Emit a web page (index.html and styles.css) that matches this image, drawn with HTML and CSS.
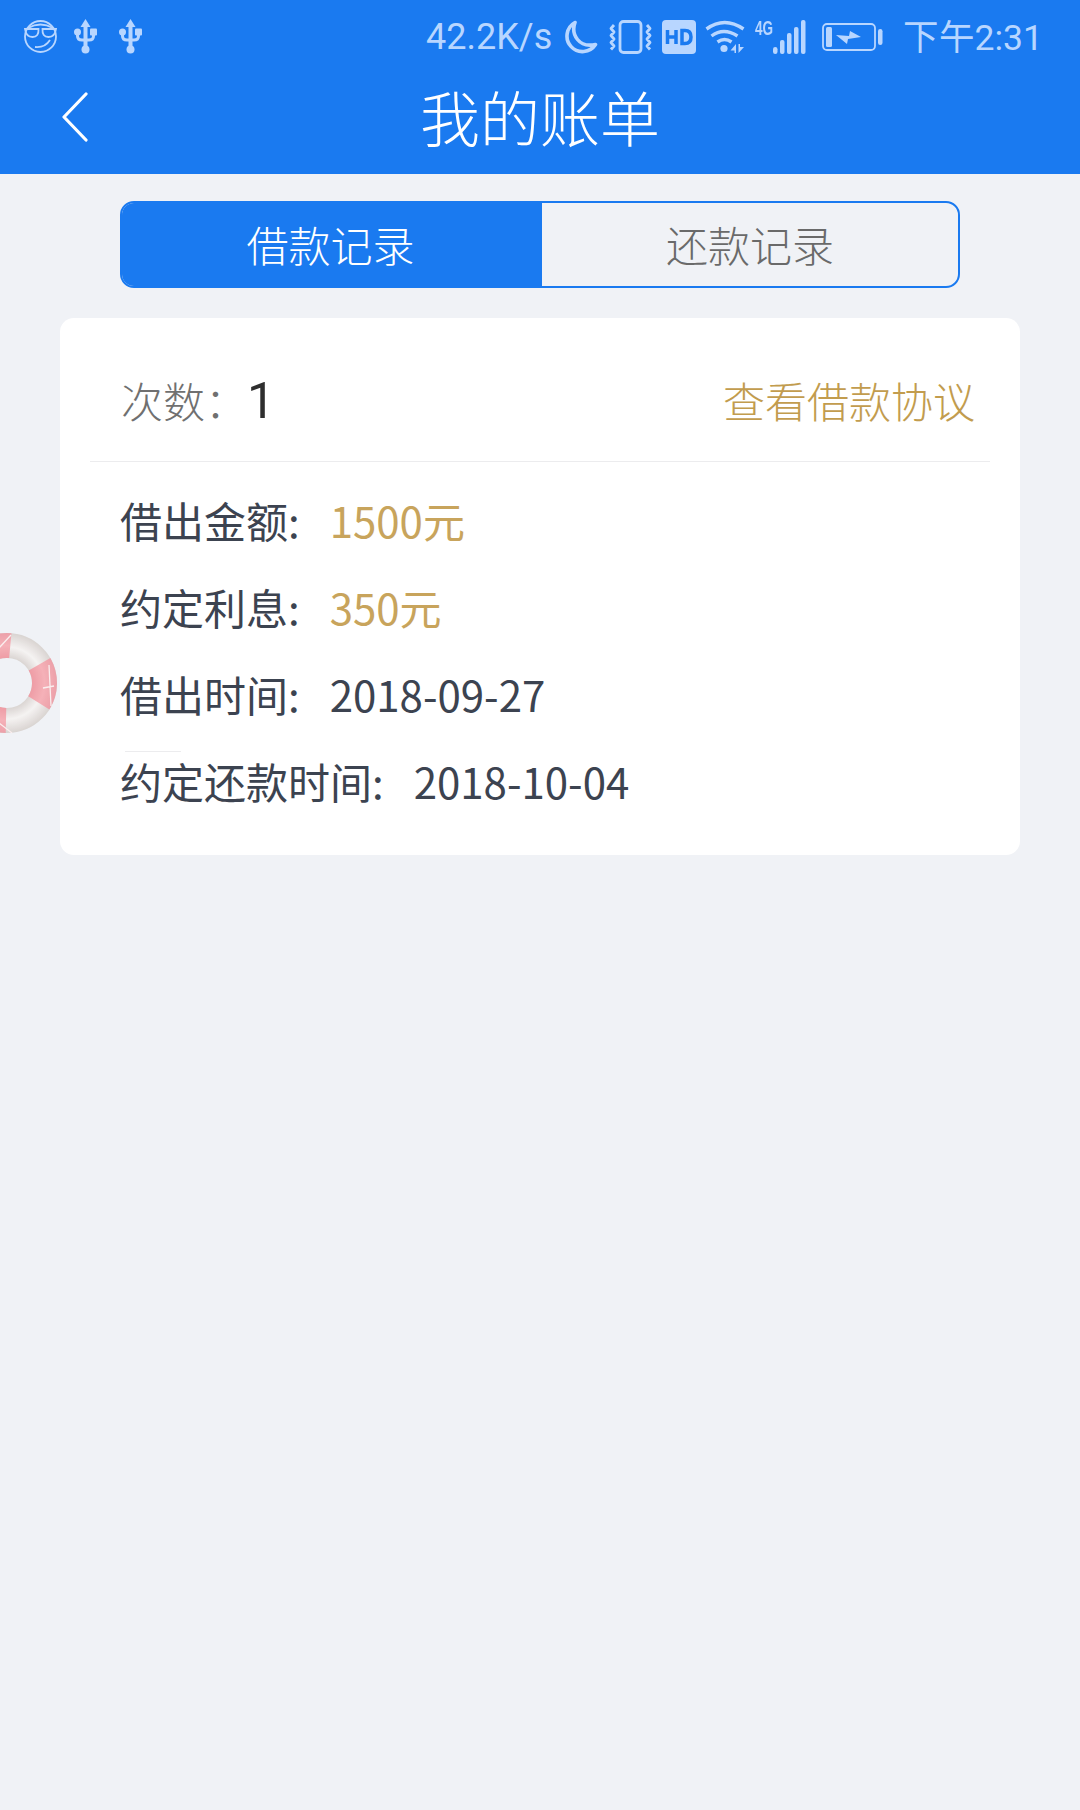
FILE: index.html
```html
<!DOCTYPE html>
<html lang="zh-CN">
<head>
    <meta charset="UTF-8">
    <title>我的账单</title>
    <link rel="stylesheet" href="styles.css">
</head>
<body>
    <header class="header">
        <div class="status">
            <svg class="ico ico-smile" viewBox="0 0 35 35" fill="none" stroke="currentColor" stroke-width="1.800">
                <circle cx="17.500" cy="17.500" r="15.500"/>
                <path d="M5 9q12.500-7 25 0"/>
                <path d="M2 10h13.500q.5 8-6 8t-7.500-8zM19.500 10h13.500q-1 8-7.500 8t-6-8z"/>
                <path d="M12 28q10 1 15-7"/>
            </svg>
            <svg class="ico ico-usb" viewBox="0 0 23 35" fill="currentColor">
                <path d="M11.500 0l5 8h-3v21h-4v-21h-3z"/>
                <circle cx="11.500" cy="30.500" r="4"/>
                <circle cx="3.500" cy="13" r="3.500"/>
                <rect x="16" y="9.500" width="7" height="7" rx="1"/>
                <path d="M2 13h3v4q0 2.500 3 2.500h3v3h-3q-6 0-6-5.500zM18 15h3v2q0 5.500-6 5.500h-3v-3h3q3 0 3-2.500z"/>
            </svg>
            <svg class="ico ico-usb usb-second" viewBox="0 0 23 35" fill="currentColor">
                <path d="M11.500 0l5 8h-3v21h-4v-21h-3z"/>
                <circle cx="11.500" cy="30.500" r="4"/>
                <circle cx="3.500" cy="13" r="3.500"/>
                <rect x="16" y="9.500" width="7" height="7" rx="1"/>
                <path d="M2 13h3v4q0 2.500 3 2.500h3v3h-3q-6 0-6-5.500zM18 15h3v2q0 5.500-6 5.500h-3v-3h3q3 0 3-2.500z"/>
            </svg>

            <span class="speed">42.2K/s</span>
            <svg class="ico ico-moon" viewBox="0 0 34 34" fill="none" stroke="currentColor" stroke-width="3.600" stroke-linejoin="round">
                <path d="M11 2.500a15.500 15.500 0 1 0 20.500 22q-12 2.500-18-5t-2.500-17z"/>
            </svg>
            <svg class="ico ico-vibrate" viewBox="0 0 43 34" fill="none" stroke="currentColor" stroke-width="2.800" stroke-linejoin="round">
                <rect x="11" y="1.500" width="21" height="31" rx="3.500"/>
                <path d="M5 5l-3 3.500 3 3.500-3 3.500 3 3.500-3 3.500 3 3.500-3 3.500M38 5l3 3.500-3 3.500 3 3.500-3 3.500 3 3.500-3 3.500 3 3.500"/>
            </svg>
            <svg class="ico ico-hd" viewBox="0 0 34 34">
                <rect width="34" height="34" rx="4" fill="currentColor"/>
                <path d="M5.500 10v14M14 10v14M5.500 17h8.500M20 10.500v13h3q6 0 6-6.500t-6-6.500z" fill="none" stroke="#1a7af0" stroke-width="3.500"/>
            </svg>
            <svg class="ico ico-wifi" viewBox="0 0 41 34" fill="none" stroke="currentColor" stroke-width="3.400">
                <path d="M1.500 9q18-13 37 0M6.500 16q12-9 26 0M12.500 22q7-5 14 0"/>
                <circle cx="19" cy="28.500" r="3.600" fill="currentColor" stroke="none"/>
                <path d="M31 24v9h-1.500v-2.500h-4zM33.500 24h1.500v3h4l-5.500 6z" fill="currentColor" stroke="none"/>
            </svg>
            <div class="signal">
                <span class="net">4G</span>
                <svg class="ico ico-bars" viewBox="0 0 33 34" fill="currentColor">
                    <rect x="0" y="27" width="4.500" height="7" rx="2.200"/>
                    <rect x="7" y="20" width="4.500" height="14" rx="2"/>
                    <rect x="14" y="13" width="4.500" height="21" rx="2"/>
                    <rect x="21" y="7" width="4.500" height="27" rx="2"/>
                    <rect x="28" y="0" width="4.500" height="34" rx="2"/>
                </svg>
            </div>
            <svg class="ico ico-battery" viewBox="0 0 61 30">
                <rect x="1" y="2" width="52" height="26" rx="4" fill="none" stroke="currentColor" stroke-width="1.800"/>
                <rect x="4" y="5" width="6" height="20" rx="1.500" fill="currentColor"/>
                <path d="M14 13l13 1 1-5 11 6-13 2-1 5z" fill="currentColor"/>
                <rect x="56" y="7" width="4.500" height="16" rx="2.200" fill="currentColor"/>
            </svg>
            <span class="time">下午2:31</span>
        </div>
        <div class="nav">
            <svg class="back" viewBox="0 0 26 50" fill="none" stroke="#fff" stroke-width="3.200" stroke-linecap="round" stroke-linejoin="round">
                <path d="M24 2l-22 23 22 23"/>
            </svg>
            <h1 class="title">我的账单</h1>
        </div>
    </header>

    <div class="tabs">
        <div class="tab tab-on">借款记录</div>
        <div class="tab">还款记录</div>
    </div>

    <section class="card">
        <div class="card-top">
            <div class="count"><span class="count-label">次数：</span><span class="count-num">1</span></div>
            <span class="agreement">查看借款协议</span>
        </div>
        <div class="rows">
            <div class="row"><span>借出金额:</span><span class="gold">1500元</span></div>
            <div class="row"><span>约定利息:</span><span class="gold">350元</span></div>
            <div class="row"><span>借出时间:</span><span>2018-09-27</span></div>
            <div class="row row-last"><span>约定还款时间:</span><span>2018-10-04</span></div>
        </div>
    </section>

    <svg class="buoy" viewBox="0 0 60 104">
        <defs>
            <radialGradient id="ringWhite" gradientUnits="userSpaceOnUse" cx="8" cy="52" r="50">
                <stop offset="0.5" stop-color="#d9d3d0"/>
                <stop offset="0.72" stop-color="#f6f3f2"/>
                <stop offset="1" stop-color="#d8d2cf"/>
            </radialGradient>
            <radialGradient id="ringPink" gradientUnits="userSpaceOnUse" cx="8" cy="52" r="50">
                <stop offset="0.5" stop-color="#ee969f"/>
                <stop offset="0.75" stop-color="#f6acb3"/>
                <stop offset="1" stop-color="#ec9aa3"/>
            </radialGradient>
        </defs>
        <circle cx="8" cy="52" r="37.500" fill="none" stroke="url(#ringWhite)" stroke-width="25"/>
        <g fill="none" stroke="url(#ringPink)" stroke-width="25">
            <path d="M40.500 33.200A37.500 37.500 0 0 1 39.800 71.900"/>
            <path d="M-21 28A37.500 37.500 0 0 1 11.300 14.600"/>
            <path d="M7 89.500A37.500 37.500 0 0 1 -21 76"/>
        </g>
        <path d="M44 57l11-2M50 34l2 41M0 17l12-13M0 92l13 10" stroke="#fbeeee" stroke-width="1.300" fill="none"/>
    </svg>
</body>
</html>
```
FILE: styles.css
```css
body {
    margin: 0;
    height: 1810px;
    background-color: #f0f2f6;
    font-family: "Noto Sans CJK SC", "Liberation Sans", sans-serif;
    color: #3c4350;
    position: relative;
    overflow: hidden;
}
.header {
    height: 174px;
    background-color: #1a7af0;
}
.status {
    height: 70px;
    display: flex;
    align-items: center;
    padding: 3px 37px 0 23px;
    box-sizing: border-box;
    color: #b8d6ff;
    font-family: Roboto, sans-serif;
    font-size: 36px;
}
.ico {
    display: block;
    flex: none;
}
.ico-smile { width: 35px; height: 35px; }
.ico-usb { width: 23px; height: 35px; margin-left: 16px; }
.usb-second { margin-left: 22px; }
.speed { margin-left: 284px; }
.ico-moon { width: 34px; height: 34px; margin-left: 12px; }
.ico-vibrate { width: 43px; height: 34px; margin-left: 11px; }
.ico-hd { width: 34px; height: 34px; margin-left: 10px; }
.ico-wifi { width: 41px; height: 34px; margin-left: 9px; }
.signal {
    display: flex;
    align-items: flex-start;
    margin-left: 9px;
}
.net {
    font-family: "Liberation Sans", sans-serif;
    font-size: 20px;
    font-weight: bold;
    line-height: 16px;
    width: 18px;
    transform: scaleX(0.68);
    transform-origin: left;
}
.ico-bars { width: 33px; height: 34px; }
.ico-battery { width: 61px; height: 30px; margin-left: 16px; }
.time {
    margin-left: auto;
    margin-top: -5px;
    font-size: 35.500px;
}
.nav {
    height: 96px;
    position: relative;
    display: flex;
    align-items: center;
    justify-content: center;
    padding-bottom: 4px;
    box-sizing: border-box;
}
.back {
    position: absolute;
    left: 62px;
    top: 22px;
    width: 26px;
    height: 50px;
}
.title {
    margin: 0;
    font-size: 60px;
    font-weight: 300;
    line-height: 80px;
    color: #fff;
}
.tabs {
    display: flex;
    width: 840px;
    height: 87px;
    margin: 27px 0 0 120px;
    box-sizing: border-box;
    border: 2px solid #1a7af0;
    border-radius: 14px;
    overflow: hidden;
}
.tab {
    flex: 1;
    display: flex;
    align-items: center;
    justify-content: center;
    padding-bottom: 3px;
    font-size: 42px;
    font-weight: 300;
    color: #6a6a6a;
}
.tab-on {
    flex: none;
    width: 420px;
    padding-right: 3px;
    box-sizing: border-box;
    background-color: #1a7af0;
    color: #fff;
}
.card {
    width: 960px;
    height: 537px;
    margin: 30px 0 0 60px;
    padding: 0 30px;
    box-sizing: border-box;
    background-color: #fff;
    border-radius: 14px;
}
.card-top {
    height: 144px;
    display: flex;
    align-items: center;
    justify-content: space-between;
    padding: 20px 15px 0 31px;
    box-sizing: border-box;
    border-bottom: 1px solid #ececee;
    font-weight: 300;
}
.count {
    display: flex;
    align-items: center;
}
.count-label {
    font-size: 42px;
    color: #707070;
    width: 126px;
}
.count-num {
    font-family: Roboto, sans-serif;
    font-size: 50px;
    font-weight: 400;
    color: #2e2e2e;
    line-height: 50px;
    margin-top: 2px;
}
.agreement {
    font-size: 42px;
    color: #c29c4e;
}
.rows {
    padding: 14px 0 0 30px;
}
.row {
    height: 87px;
    display: flex;
    align-items: center;
    gap: 30px;
    font-size: 42px;
}
.row-last {
    position: relative;
}
.row-last::before {
    content: "";
    position: absolute;
    left: 5px;
    top: 14px;
    width: 56px;
    height: 1px;
    background-color: #ececee;
}
.gold {
    color: #c8a45c;
}
.buoy {
    position: absolute;
    left: -1px;
    top: 631px;
    width: 60px;
    height: 104px;
    opacity: 0.92;
    filter: blur(0.5px);
}
```
